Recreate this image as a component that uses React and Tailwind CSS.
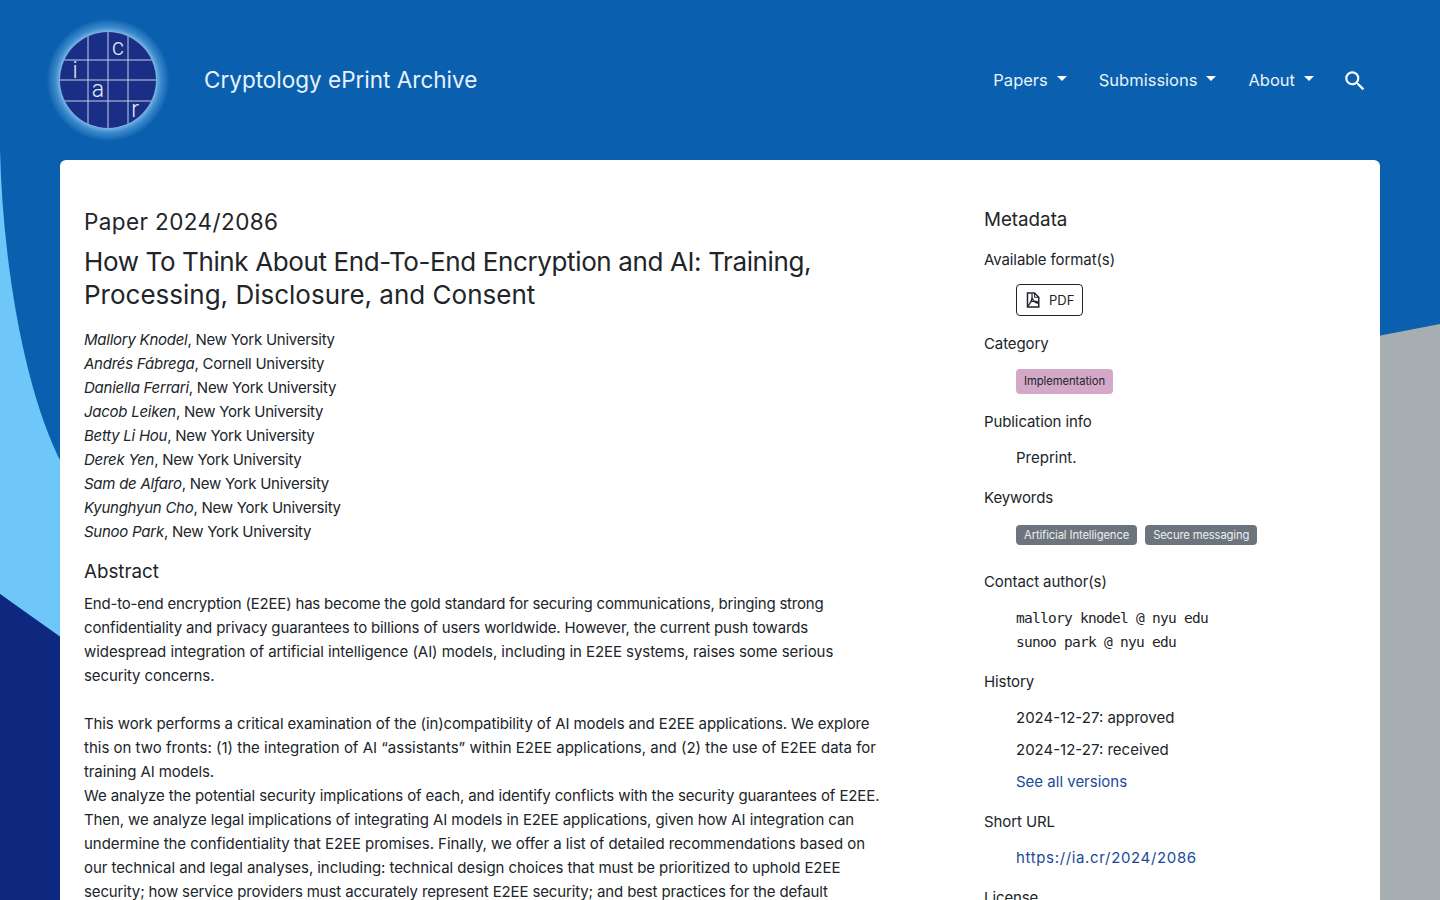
import { MdSearch } from "react-icons/md";

const authors = [
  ["Mallory Knodel", "New York University"],
  ["Andrés Fábrega", "Cornell University"],
  ["Daniella Ferrari", "New York University"],
  ["Jacob Leiken", "New York University"],
  ["Betty Li Hou", "New York University"],
  ["Derek Yen", "New York University"],
  ["Sam de Alfaro", "New York University"],
  ["Kyunghyun Cho", "New York University"],
  ["Sunoo Park", "New York University"],
];

// abstract keeps the original line breaks, tracking tuned per line
const abstractTop = [
  ["End-to-end encryption (E2EE) has become the gold standard for securing communications, bringing strong", "tracking-[-0.2px]"],
  ["confidentiality and privacy guarantees to billions of users worldwide. However, the current push towards", "tracking-[-0.15px]"],
  ["widespread integration of artificial intelligence (AI) models, including in E2EE systems, raises some serious", "tracking-[-0.06px]"],
  ["security concerns.", "tracking-[-0.1px]"],
];

const abstractBottom = [
  ["This work performs a critical examination of the (in)compatibility of AI models and E2EE applications. We explore", "tracking-[-0.115px]"],
  ["this on two fronts: (1) the integration of AI “assistants” within E2EE applications, and (2) the use of E2EE data for", "tracking-[0px]"],
  ["training AI models.", "tracking-[-0.1px]"],
  ["We analyze the potential security implications of each, and identify conflicts with the security guarantees of E2EE.", "tracking-[-0.11px]"],
  ["Then, we analyze legal implications of integrating AI models in E2EE applications, given how AI integration can", "tracking-[-0.1px]"],
  ["undermine the confidentiality that E2EE promises. Finally, we offer a list of detailed recommendations based on", "tracking-[-0.05px]"],
  ["our technical and legal analyses, including: technical design choices that must be prioritized to uphold E2EE", "tracking-[-0.07px]"],
  ["security; how service providers must accurately represent E2EE security; and best practices for the default", "tracking-[-0.14px]"],
];

function Background() {
  return (
    <svg className="absolute top-0 left-0 -z-10" width="1440" height="900" viewBox="0 0 1440 900">
      <rect width="1440" height="900" fill="#0a60ae" />
      <path d="M0 150 C3 270 26 395 62 464 L62 640 L0 594 Z" fill="#6ec6f9" />
      <path d="M0 594 L62 638 L62 900 L0 900 Z" fill="#0e2880" />
      <path d="M1378 336 L1440 324 L1440 900 L1378 900 Z" fill="#a7aeb1" />
    </svg>
  );
}

function Logo() {
  return (
    <svg width="128" height="128" viewBox="0 0 128 128" className="shrink-0">
      <defs>
        <radialGradient id="glow">
          <stop offset="0.75" stopColor="#7ab6e6" />
          <stop offset="0.82" stopColor="#3f8cce" />
          <stop offset="0.96" stopColor="#0a60ae" />
        </radialGradient>
        <clipPath id="disc">
          <circle cx="64" cy="64" r="48" />
        </clipPath>
      </defs>
      <circle cx="64" cy="64" r="64" fill="url(#glow)" />
      <circle cx="64" cy="64" r="48" fill="#1a2e85" />
      <g clipPath="url(#disc)" stroke="#c3d0ea" strokeWidth="1">
        <path d="M44 0V128M64 0V128M84 0V128M0 44H128M0 64H128M0 85H128" />
      </g>
      <g fill="#e6ecf6" fontFamily="Roboto, sans-serif" fontWeight="300" fontSize="23" textAnchor="middle">
        <text x="74" y="39">c</text>
        <text x="31" y="62">i</text>
        <text x="54" y="81">a</text>
        <text x="91" y="101">r</text>
      </g>
    </svg>
  );
}

function PdfIcon() {
  return (
    <svg width="14" height="16" viewBox="0 0 14 16" fill="none" stroke="#212529" className="shrink-0">
      <path d="M1.5 1H8.5L12.75 5.25V15H1.5Z" strokeWidth="1.5" />
      <path d="M8.5 1V5.25H12.75" strokeWidth="1" />
      <path d="M6 2C6.6 6.5 5 11 1.5 14.5M4.2 10C7 8.8 10 8.8 12.75 10.5M6.3 6C7 8.2 9 10.8 12.75 11.5" strokeWidth="1.2" />
    </svg>
  );
}

function NavItem({ label, caret = true }) {
  return (
    <a className="flex items-center text-[#e8f2fb]">
      {label}
      {caret && <span className="ml-[9px] mb-[3px] border-x-[5px] border-t-[5px] border-x-transparent border-t-white" />}
    </a>
  );
}

function Label({ children, className = "" }) {
  return <div className={`h-6 leading-6 tracking-[-0.1px] ${className}`}>{children}</div>;
}

export default function App() {
  return (
    <div className="relative min-h-[900px] text-[#212529] text-[15px] leading-6 font-['Inter',sans-serif]">
      <Background />
      <header className="h-40 pl-11 pr-[72px] flex items-center">
        <Logo />
        <a className="ml-8 text-[22.5px] text-[#e8f2fb]">Cryptology ePrint Archive</a>
        <nav className="ml-auto flex items-center gap-8 text-[16.5px]">
          <NavItem label="Papers" />
          <NavItem label="Submissions" />
          <NavItem label="About" />
          <MdSearch className="text-white -ml-1 mt-px" size={26} />
        </nav>
      </header>

      <main className="mx-[60px] bg-white rounded-t-md flex pt-12 pl-6">
        <div className="w-[800px] shrink-0">
          <h4 className="text-[22.5px] leading-7 tracking-[0.4px]">Paper 2024/2086</h4>
          <h3 className="mt-[9px] w-[760px] text-[26px] leading-[33px]">
            <span className="tracking-[-0.38px]">How To Think About End-To-End Encryption and AI: Training,</span>{" "}
            Processing, Disclosure, and Consent
          </h3>
          <div className="mt-[17px] tracking-[-0.25px]">
            {authors.map(([name, school]) => (
              <div key={name}>
                <i>{name}</i>, {school}
              </div>
            ))}
          </div>
          <h5 className="mt-4 text-[18.75px] leading-6">Abstract</h5>
          <div className="mt-2 whitespace-nowrap">
            {abstractTop.map(([line, track]) => (
              <div key={line} className={track}>{line}</div>
            ))}
            <div className="h-6" />
            {abstractBottom.map(([line, track]) => (
              <div key={line} className={track}>{line}</div>
            ))}
          </div>
        </div>

        <aside className="ml-[100px] w-[372px]">
          <h5 className="text-[18.75px] leading-6">Metadata</h5>
          <Label className="mt-[16px]">Available format(s)</Label>
          <div className="mt-3 pl-8">
            <a className="inline-flex items-center h-8 pl-[9px] pr-2 gap-[9px] border border-[#212529] rounded text-[13px]">
              <PdfIcon />
              PDF
            </a>
          </div>
          <Label className="mt-4">Category</Label>
          <div className="mt-[13px] pl-8 flex">
            <span className="h-[25px] leading-[25px] px-2 rounded bg-[#d4a8c7] text-[11.25px] tracking-[-0.07px]">Implementation</span>
          </div>
          <Label className="mt-[16px]">Publication info</Label>
          <div className="mt-3 pl-8">Preprint.</div>
          <Label className="mt-4">Keywords</Label>
          <div className="mt-[15px] pl-8 flex gap-2">
            <span className="h-5 leading-5 px-2 rounded bg-[#6c757d] text-[#eceef0] text-[11.25px] tracking-[-0.12px]">Artificial Intelligence</span>
            <span className="h-5 leading-5 px-2 rounded bg-[#6c757d] text-[#eceef0] text-[11.25px] tracking-[-0.15px]">Secure messaging</span>
          </div>
          <Label className="mt-[25px]">Contact author(s)</Label>
          <div className="mt-3 pl-8 font-['DejaVu_Sans_Mono',monospace] text-[14.5px] tracking-[-0.73px]">
            <div>mallory knodel @ nyu edu</div>
            <div>sunoo park @ nyu edu</div>
          </div>
          <Label className="mt-4">History</Label>
          <div className="mt-3 pl-8 flex flex-col gap-2">
            <div>2024-12-27: approved</div>
            <div>2024-12-27: received</div>
            <a className="text-[#1a4a9a]">See all versions</a>
          </div>
          <Label className="mt-4">Short URL</Label>
          <div className="mt-3 pl-8">
            <a className="text-[#1a4a9a] tracking-[0.65px]">https://ia.cr/2024/2086</a>
          </div>
          <Label className="mt-4">License</Label>
        </aside>
      </main>
    </div>
  );
}
